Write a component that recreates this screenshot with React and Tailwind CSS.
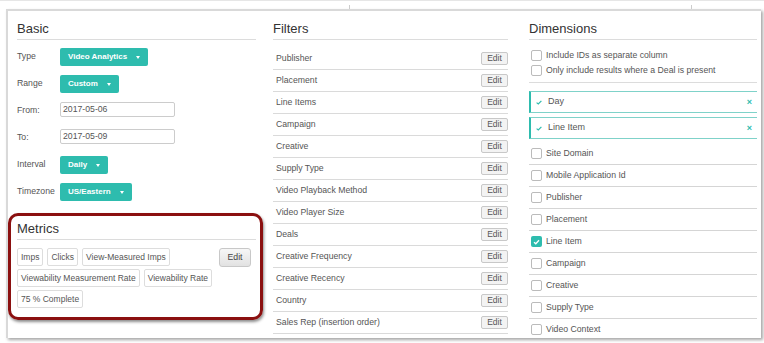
const filters = [
  'Publisher',
  'Placement',
  'Line Items',
  'Campaign',
  'Creative',
  'Supply Type',
  'Video Playback Method',
  'Video Player Size',
  'Deals',
  'Creative Frequency',
  'Creative Recency',
  'Country',
  'Sales Rep (insertion order)',
]

const dims = [
  { name: 'Site Domain' },
  { name: 'Mobile Application Id' },
  { name: 'Publisher' },
  { name: 'Placement' },
  { name: 'Line Item', checked: true },
  { name: 'Campaign' },
  { name: 'Creative' },
  { name: 'Supply Type' },
  { name: 'Video Context' },
]

function Heading({ children }) {
  return (
    <h2 className="pt-[10px] pb-[2px] border-b border-[#dcdcdc] text-[13px] leading-[16px] text-[#333]">
      {children}
    </h2>
  )
}

function TealButton({ label }) {
  return (
    <div className="h-[18px] rounded-[2px] bg-[#2ebcae] text-white font-bold text-[8px] px-[8px] flex items-center gap-[9px]">
      <span>{label}</span>
      <span className="w-0 h-0 border-x-[2.5px] border-x-transparent border-t-[3px] border-t-white" />
    </div>
  )
}

function Row({ label, children }) {
  return (
    <div className="h-[18px] flex items-center">
      <span className="w-[43px] text-[8.7px] text-[#555]">{label}</span>
      {children}
    </div>
  )
}

function DateInput({ value }) {
  return (
    <div className="self-start h-[15px] w-[115px] border border-[#ccc] rounded-[2px] bg-white pl-[2px] flex items-center text-[8.7px] text-[#555]">
      {value}
    </div>
  )
}

function Tag({ children }) {
  return (
    <span className="h-[18px] px-[3px] border border-[#ddd] rounded-[2px] bg-white flex items-center text-[8.5px] text-[#555] whitespace-nowrap">
      {children}
    </span>
  )
}

function Checkbox({ checked }) {
  if (checked) {
    return (
      <span className="w-[11px] h-[11px] rounded-[2px] bg-[#2ebcae] flex items-center justify-center shrink-0">
        <svg width="7" height="6" viewBox="0 0 7 6">
          <path d="M1 3.2 L2.8 4.8 L6 1.2" fill="none" stroke="white" strokeWidth="1.3" />
        </svg>
      </span>
    )
  }
  return <span className="w-[11px] h-[11px] rounded-[2px] border border-[#bbb] bg-white shrink-0" />
}

function Check() {
  return (
    <svg width="6" height="5" viewBox="0 0 6 5">
      <path d="M0.6 2.6 L2.3 4 L5.4 0.8" fill="none" stroke="#2ebcae" strokeWidth="1.2" />
    </svg>
  )
}

function SelectedDim({ name }) {
  return (
    <div className="h-[22px] border border-r-0 border-[#7fd2c9] border-l-[#2ebcae] border-l-2 flex items-center pl-[5px] pr-[5px]">
      <Check />
      <span className="ml-[6px] text-[9px] text-[#555]">{name}</span>
      <span className="ml-auto text-[9px] font-bold leading-none text-[#2ebcae]">×</span>
    </div>
  )
}

export default function App() {
  return (
    <div className="w-[764px] h-[343px] bg-white overflow-hidden font-['Liberation_Sans',Arial,sans-serif]">
      <div className="h-[9px] border-t border-[#e6e6e6] flex items-end">
        <span className="ml-[349px] w-px h-[4px] bg-[#ccc]" />
        <span className="ml-[341px] w-px h-[4px] bg-[#ccc]" />
      </div>
      <div className="ml-[6px] w-[755px] h-[329px] border-t-2 border-l-2 border-[#d9d9d9] bg-white overflow-hidden flex shadow-[2px_2px_3px_rgba(0,0,0,0.35)]">
        {/* Basic */}
        <div className="ml-[9px] w-[239px] shrink-0">
          <Heading>Basic</Heading>
          <div className="mt-[8px] flex flex-col gap-[9px]">
            <Row label="Type"><TealButton label="Video Analytics" /></Row>
            <Row label="Range"><TealButton label="Custom" /></Row>
            <Row label="From:"><DateInput value="2017-05-06" /></Row>
            <Row label="To:"><DateInput value="2017-05-09" /></Row>
            <Row label="Interval"><TealButton label="Daily" /></Row>
            <Row label="Timezone"><TealButton label="US/Eastern" /></Row>
          </div>

          {/* Metrics, with the red highlight */}
          <div className="mt-[12px] -ml-[9px] w-[255px] pl-[6px] pr-[4px] pt-[5px] pb-[9px] border-[3px] border-[#8b1010] rounded-[10px] shadow-[1px_2px_3px_rgba(0,0,0,0.45)]">
            <h2 className="pb-[2px] border-b border-[#dcdcdc] text-[13px] leading-[16px] text-[#333]">Metrics</h2>
            <div className="mt-[8px] flex items-start pr-[5px]">
              <div className="w-[201px] flex flex-wrap gap-x-[4px] gap-y-[3px]">
                <Tag>Imps</Tag>
                <Tag>Clicks</Tag>
                <Tag>View-Measured Imps</Tag>
                <Tag>Viewability Measurement Rate</Tag>
                <Tag>Viewability Rate</Tag>
                <Tag>75 % Complete</Tag>
              </div>
              <button className="ml-auto h-[19px] w-[32px] rounded-[3px] border border-[#c8c8c8] bg-gradient-to-b from-[#f7f7f7] to-[#e2e2e2] text-[8.7px] text-[#444]">
                Edit
              </button>
            </div>
          </div>
        </div>

        {/* Filters */}
        <div className="ml-[17px] w-[235px] shrink-0">
          <Heading>Filters</Heading>
          <div className="mt-[8px]">
            {filters.map((f) => (
              <div key={f} className="h-[22px] border-b border-[#dadada] flex items-center pl-[3px]">
                <span className="text-[8.7px] text-[#555]">{f}</span>
                <span className="ml-auto h-[13px] w-[27px] border border-[#c8c8c8] rounded-[2px] bg-[#f3f3f3] flex items-center justify-center text-[8.5px] text-[#555]">
                  Edit
                </span>
              </div>
            ))}
          </div>
        </div>

        {/* Dimensions */}
        <div className="ml-[21px] w-[228px] shrink-0">
          <Heading>Dimensions</Heading>
          <div className="pt-[8px] pb-[4px] border-b border-[#dcdcdc]">
            <label className="h-[15px] flex items-center pl-[2px] gap-[4px] text-[8.7px] text-[#555]">
              <Checkbox />
              Include IDs as separate column
            </label>
            <label className="h-[15px] flex items-center pl-[2px] gap-[4px] text-[8.7px] text-[#555]">
              <Checkbox />
              Only include results where a Deal is present
            </label>
          </div>
          <div className="mt-[8px] flex flex-col gap-[4px]">
            <SelectedDim name="Day" />
            <SelectedDim name="Line Item" />
          </div>
          <div className="mt-[4px]">
            {dims.map((d) => (
              <div key={d.name} className="h-[22px] border-b border-[#d5d5d5] flex items-center pl-[2px] gap-[4px] text-[8.7px] text-[#555]">
                <Checkbox checked={d.checked} />
                {d.name}
              </div>
            ))}
          </div>
        </div>
      </div>
    </div>
  )
}
